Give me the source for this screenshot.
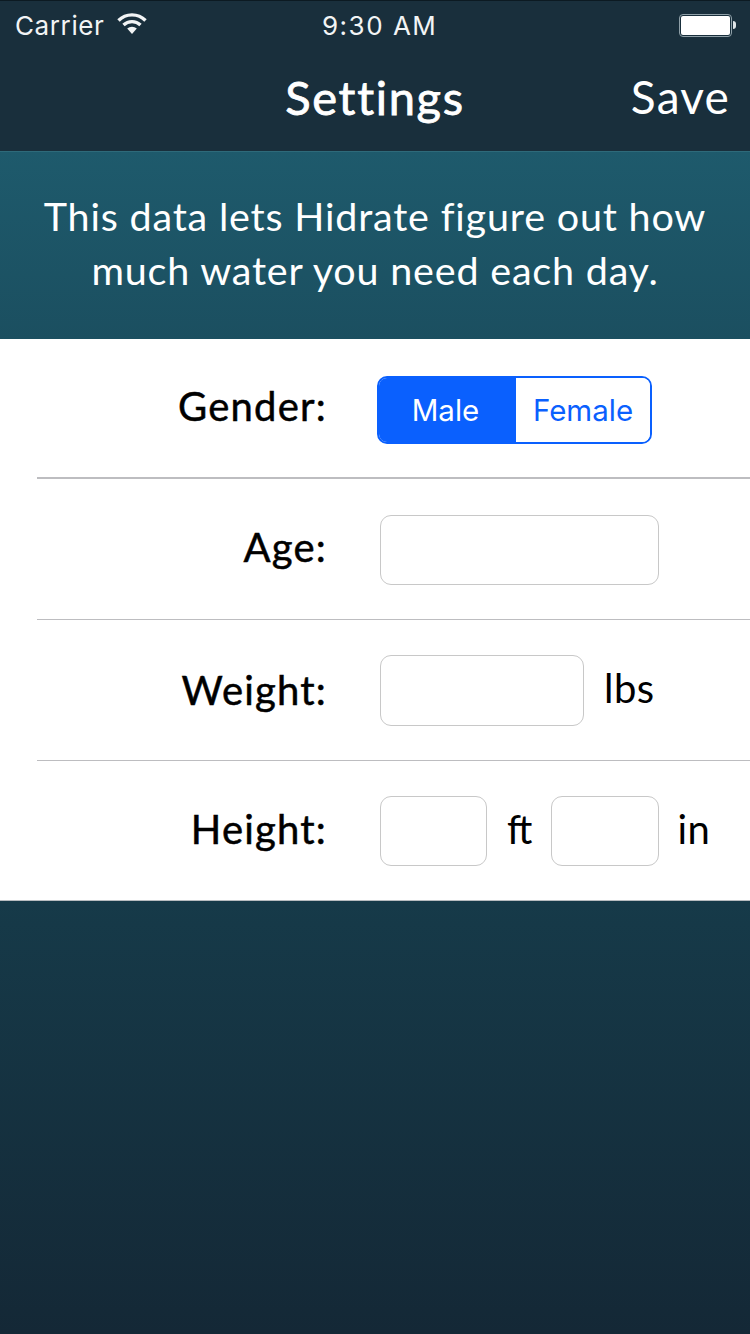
<script>
	let gender = 'Male';
	const rows = ['Age', 'Weight', 'Height'];
</script>

<div class="page">
	<header class="top">
		<div class="status">
			<div class="status-left">
				<span class="carrier">Carrier</span>
				<svg class="wifi" width="30" height="22" viewBox="0 0 30 22">
					<path d="M1.5 7.5 A19 19 0 0 1 28.5 7.5" />
					<path d="M6.5 12 A12.5 12.5 0 0 1 23.5 12" />
					<path d="M15 21 L10.2 15.6 A7 7 0 0 1 19.8 15.6 Z" class="fill" />
				</svg>
			</div>
			<span class="time">9:30 AM</span>
			<div class="battery">
				<div class="battery-body"><div class="battery-level"></div></div>
				<div class="battery-tip"></div>
			</div>
		</div>
		<nav class="nav">
			<span class="title">Settings</span>
			<span class="save">Save</span>
		</nav>
	</header>

	<section class="banner">
		<p>This data lets Hidrate figure out how<br />much water you need each day.</p>
	</section>

	<form class="form">
		<div class="row row-gender">
			<span class="label">Gender:</span>
			<div class="segment">
				<button type="button" class="seg male" class:active={gender === 'Male'} onclick={() => (gender = 'Male')}>Male</button>
				<button type="button" class="seg female" class:active={gender === 'Female'} onclick={() => (gender = 'Female')}>Female</button>
			</div>
		</div>
		<div class="row row-age">
			<span class="label">{rows[0]}:</span>
			<input class="field age" />
		</div>
		<div class="row row-weight">
			<span class="label flat">{rows[1]}:</span>
			<input class="field weight" />
			<span class="unit lbs">lbs</span>
		</div>
		<div class="row last">
			<span class="label">{rows[2]}:</span>
			<input class="field small" />
			<span class="unit ft">ft</span>
			<input class="field small second" />
			<span class="unit in">in</span>
		</div>
	</form>

	<div class="bottom"></div>
</div>

<style>
	:global(body) {
		margin: 0;
		background: #142836;
	}

	.page {
		width: 750px;
		height: 1334px;
		display: flex;
		flex-direction: column;
		font-family: Lato, 'Open Sans', sans-serif;
		overflow: hidden;
	}

	.top {
		height: 151px;
		box-sizing: border-box;
		background: #192f3c;
		border-top: 1px solid #0c1a22;
		color: #fff;
	}

	.status {
		height: 49px;
		padding: 0 14px 0 15px;
		display: flex;
		align-items: center;
		justify-content: space-between;
		position: relative;
		font-family: Inter, 'Liberation Sans', sans-serif;
		font-size: 26px;
		color: #f2f4f5;
	}

	.status-left {
		display: flex;
		align-items: center;
		gap: 13px;
	}

	.carrier {
		letter-spacing: 0.6px;
	}

	.wifi {
		margin-top: -3px;
	}

	.wifi path {
		fill: none;
		stroke: #f2f4f5;
		stroke-width: 3.4;
	}

	.wifi path.fill {
		fill: #f2f4f5;
		stroke: none;
	}

	.time {
		position: absolute;
		left: 322px;
		letter-spacing: 1.5px;
	}

	.battery {
		display: flex;
		align-items: center;
		margin-top: -1px;
	}

	.battery-body {
		width: 53px;
		height: 23px;
		box-sizing: border-box;
		border: 1px solid #8fa0a8;
		border-radius: 4px;
		padding: 1px;
	}

	.battery-level {
		height: 100%;
		background: #fff;
		border-radius: 2px;
	}

	.battery-tip {
		width: 3px;
		height: 8px;
		background: #dfe5e8;
		border-radius: 0 3px 3px 0;
		margin-left: 1px;
	}

	.nav {
		height: 101px;
		display: flex;
		align-items: center;
		justify-content: center;
		position: relative;
		padding-bottom: 8px;
		box-sizing: border-box;
	}

	.title {
		font-size: 47px;
		font-weight: 400;
		letter-spacing: 1.7px;
		-webkit-text-stroke: 0.8px #fff;
	}

	.save {
		position: absolute;
		right: 20px;
		font-size: 46px;
		font-weight: 400;
		letter-spacing: 1.2px;
	}

	.banner {
		height: 188px;
		box-sizing: border-box;
		border-top: 1px solid #2e6a7a;
		background: linear-gradient(#1e5a6c, #1b4f60);
		display: flex;
		align-items: center;
		justify-content: center;
		color: #fff;
	}

	.banner p {
		margin: 0 0 5px;
		font-size: 39.5px;
		line-height: 54px;
		text-align: center;
		letter-spacing: 0.8px;
	}

	.form {
		height: 562px;
		box-sizing: border-box;
		background: #fff;
		border-bottom: 1px solid #b8bcc0;
		display: flex;
		flex-direction: column;
		color: #000;
	}

	.row {
		height: 141px;
		box-sizing: border-box;
		margin-left: 37px;
		display: flex;
		align-items: center;
		border-bottom: 1px solid #bdbdc0;
		font-size: 40px;
	}

	.row-gender {
		height: 140px;
		border-bottom-width: 2px;
	}

	.row.last {
		height: 139px;
		border-bottom: none;
	}

	.label {
		width: 290px;
		margin-right: 53px;
		margin-bottom: 4px;
		text-align: right;
		letter-spacing: 1.2px;
		font-weight: 400;
		-webkit-text-stroke: 0.5px #000;
	}

	.label.flat {
		margin-bottom: 0;
	}

	.field {
		height: 70px;
		margin-top: 1px;
		box-sizing: border-box;
		border: 1px solid #c8c8c8;
		border-radius: 11px;
		background: #fff;
		padding: 0;
		outline: none;
	}

	.age {
		width: 279px;
		margin-top: 2px;
	}

	.weight {
		width: 204px;
		height: 71px;
	}

	.small {
		width: 107px;
	}

	.small.second {
		width: 108px;
	}

	.unit {
		letter-spacing: 0.5px;
		margin-bottom: 4px;
	}

	.lbs {
		margin-left: 20px;
	}

	.ft {
		margin-left: 20px;
		margin-right: 22px;
		letter-spacing: -3px;
	}

	.in {
		margin-left: 18px;
	}

	.row-gender .segment {
		margin-left: -3px;
		margin-top: 3px;
	}

	.segment {
		width: 275px;
		height: 68px;
		box-sizing: border-box;
		display: flex;
		border: 2px solid #0a60fe;
		border-radius: 10px;
		overflow: hidden;
	}

	.seg {
		border: none;
		padding: 0;
		margin: 0;
		background: #fff;
		color: #0a60fe;
		font-family: Inter, 'Liberation Sans', sans-serif;
		font-size: 29.5px;
	}

	.seg.active {
		background: #0a60fe;
		color: #fff;
	}

	.male {
		width: 137px;
		padding-right: 4px;
	}

	.female {
		flex: 1;
	}

	.bottom {
		flex: 1;
		background: linear-gradient(#163a49, #142836);
	}
</style>
